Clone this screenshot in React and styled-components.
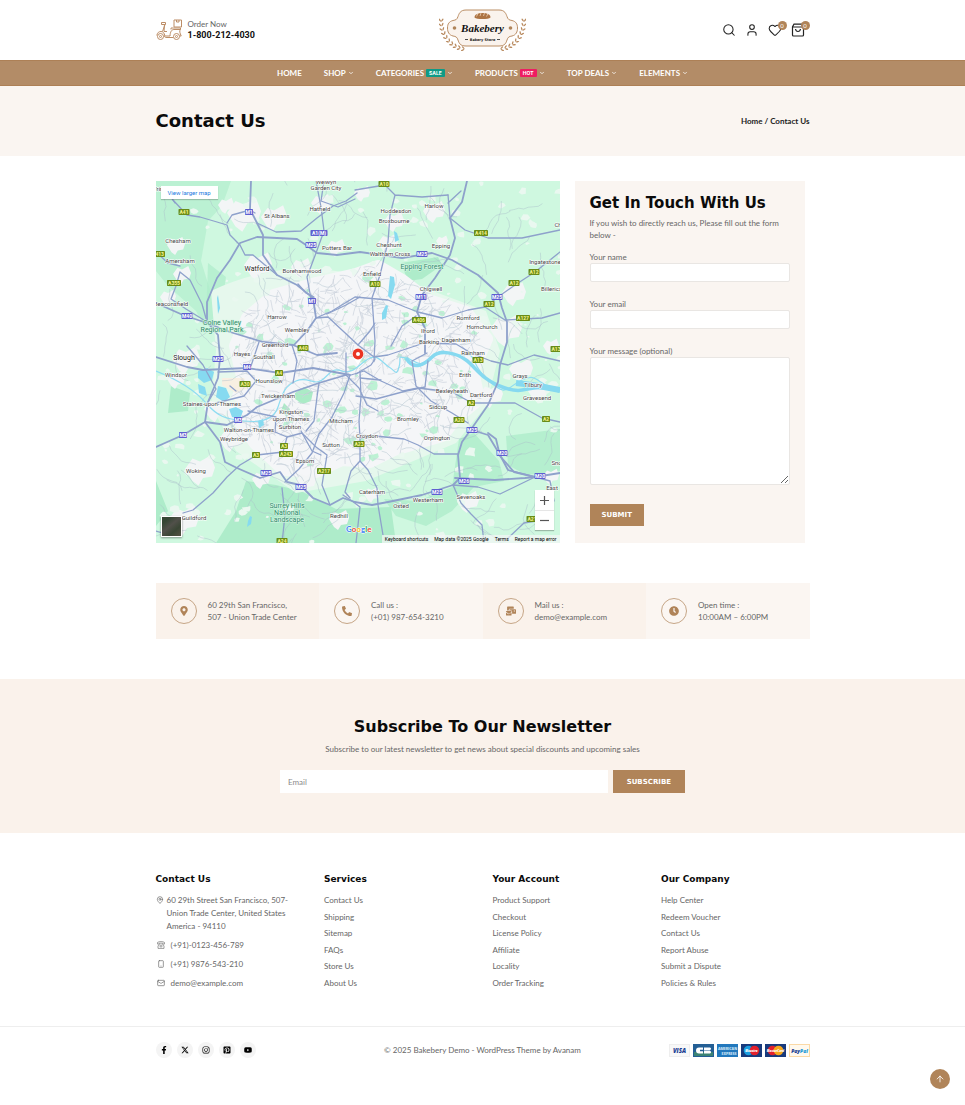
import React from 'react';
import styled, { createGlobalStyle } from 'styled-components';
import { Search, User, Heart, ChevronDown, ArrowUp, MapPin, Mail, Smartphone } from 'lucide-react';
import {
  FaMapMarkerAlt, FaPhoneAlt, FaMailBulk, FaClock, FaFacebookF, FaInstagram, FaPinterestSquare, FaYoutube,
} from 'react-icons/fa';
import { FaXTwitter } from 'react-icons/fa6';

const brown = '#b08459';
const wide = '"DejaVu Sans", sans-serif';
const body = 'Lato, "Liberation Sans", sans-serif';

const GlobalStyle = createGlobalStyle`
  *, *::before, *::after { box-sizing: border-box; }
  body { margin: 0; background: #fff; color: #666; font: 400 8px/12px ${body}; }
  h1, h2, h3, p, ul, address { margin: 0; padding: 0; font-style: normal; }
  ul { list-style: none; }
  a { color: inherit; text-decoration: none; }
  button, input, textarea { font: inherit; color: inherit; }
`;

const Container = styled.div`
  width: min(100% - 32px, 654px);
  margin: 0 auto;
`;

/* Header */

const HeaderRow = styled(Container)`
  display: grid;
  grid-template-columns: 1fr auto 1fr;
  align-items: center;
  height: 60px;
`;

const OrderNow = styled.a`
  display: flex;
  align-items: center;
  gap: 6px;
  line-height: 11px;
  strong {
    display: block;
    font: 700 9px/11px Roboto, sans-serif;
    color: #111;
  }
`;

const LogoLink = styled.a`
  display: block;
  svg { display: block; }
`;

const Tools = styled.div`
  display: flex;
  justify-content: flex-end;
  gap: 9px;
  padding-right: 5px;
`;

const ToolButton = styled.button`
  position: relative;
  display: flex;
  padding: 0;
  border: 0;
  background: none;
  color: #222;
  cursor: pointer;
`;

const Count = styled.span`
  position: absolute;
  top: -2px;
  right: -5px;
  width: 9px;
  height: 9px;
  border-radius: 50%;
  background: ${brown};
  color: #fff;
  font-size: 6px;
  line-height: 9px;
  text-align: center;
`;

const Nav = styled.nav`
  display: flex;
  justify-content: center;
  gap: 22px;
  height: 26px;
  background: #b38c67;
  border: solid #ad8056;
  border-width: 1px 0;
`;

const NavLink = styled.a`
  display: flex;
  align-items: center;
  gap: 2px;
  color: #fff;
  font-weight: 700;
  text-transform: uppercase;
  white-space: nowrap;
`;

const Tag = styled.span`
  padding: 0 3px;
  border-radius: 1px;
  background: ${(p) => p.$color};
  font: 700 5px/8px Inter, sans-serif;
`;

const Banner = styled.div`
  background: #faf5f1;
`;

const BannerRow = styled(Container)`
  display: flex;
  align-items: center;
  justify-content: space-between;
  height: 70px;
`;

const Heading = styled.h2`
  color: #0b0b0b;
  font: 700 ${(p) => p.$size || 15}px/${(p) => p.$line || 14}px ${wide};
`;

const Crumbs = styled.nav`
  color: #222;
  font-weight: 700;
`;

/* Map and contact form */

const ContactRow = styled(Container)`
  display: grid;
  grid-template-columns: 404fr 230fr;
  gap: 15px;
  margin-top: 25px;
  padding-right: 5px;
`;

const MapFrame = styled.section`
  position: relative;
  min-width: 0;
  overflow: hidden;
  font-family: Roboto, sans-serif;
`;

const MapArt = styled.svg`
  display: block;
  width: 100%;
  height: 100%;
`;

const LargerMap = styled.a`
  position: absolute;
  top: 5px;
  left: 5px;
  padding: 0 7px;
  background: #fff;
  box-shadow: 0 1px 1px rgba(0, 0, 0, 0.2);
  color: #1a7ae0;
  font-size: 6px;
  line-height: 13px;
`;

const ZoomBox = styled.div`
  position: absolute;
  right: 6px;
  bottom: 13px;
  width: 19px;
  background: #fff;
  box-shadow: 0 1px 1px rgba(0, 0, 0, 0.25);
`;

const ZoomButton = styled.button`
  display: block;
  width: 100%;
  height: 20px;
  padding: 0;
  border: 0;
  background: none;
  color: #555;
  cursor: pointer;
  & + & { border-top: 1px solid #e6e6e6; }
  svg { display: block; margin: 0 auto; }
`;

const Satellite = styled.button`
  position: absolute;
  left: 5px;
  bottom: 6px;
  width: 21px;
  height: 21px;
  padding: 0;
  border: 1px solid #fff;
  box-shadow: 0 1px 2px rgba(0, 0, 0, 0.4);
  background: linear-gradient(140deg, #354634 20%, #51504a 45%, #3a4635 70%, #555143);
`;

const MapCredits = styled.div`
  position: absolute;
  right: 0;
  bottom: 0;
  display: flex;
  gap: 6px;
  padding: 0 3px;
  background: rgba(245, 247, 246, 0.7);
  color: #000;
  font-size: 5px;
  line-height: 8px;
`;

const FormCard = styled.form`
  padding: 15px 15px 16px;
  background: #faf5f1;
`;

const Intro = styled.p`
  margin: 7px 0 10px;
`;

const Field = styled.label`
  display: block;
  margin-bottom: 16px;
`;

const boxed = `
  display: block;
  width: 100%;
  border: 1px solid #e9e6e3;
  border-radius: 2px;
  background: #fff;
  outline: none;
`;

const TextInput = styled.input`
  ${boxed}
  height: 19px;
  padding: 0 6px;
`;

const TextArea = styled.textarea`
  ${boxed}
  height: 128px;
  padding: 6px;
  resize: vertical;
`;

const Action = styled.button`
  height: ${(p) => p.$height}px;
  padding: 0 ${(p) => p.$pad || 12}px;
  border: 0;
  background: ${brown};
  color: #fff;
  font: 700 7px/10px ${wide};
  text-transform: uppercase;
  cursor: pointer;
`;

const Submit = styled(Action)`
  margin-top: 3px;
`;

/* Info strip */

const InfoStrip = styled(Container)`
  display: grid;
  grid-template-columns: repeat(4, 1fr);
  margin-top: 40px;
  margin-bottom: 40px;
`;

const InfoCell = styled.div`
  display: flex;
  align-items: center;
  gap: 11px;
  height: 56px;
  padding-left: 15px;
  background: #fbf6f2;
  &:nth-child(odd) { background: #faf2eb; }
`;

const Ring = styled.span`
  display: flex;
  align-items: center;
  justify-content: center;
  flex: none;
  width: 26px;
  height: 26px;
  border: 1px solid #c6a687;
  border-radius: 50%;
  color: ${brown};
`;

/* Newsletter */

const Newsletter = styled.section`
  padding: 40px 16px;
  background: #faf2eb;
  text-align: center;
`;

const Lead = styled.p`
  margin: 9px 0 15px;
`;

const SubscribeForm = styled.form`
  display: flex;
  gap: 5px;
  max-width: 405px;
  margin: 0 auto;
`;

const EmailInput = styled.input`
  flex: 1;
  min-width: 0;
  height: 23px;
  padding: 0 8px;
  border: 0;
  background: #fff;
  outline: none;
  &::placeholder { color: #8a8a8a; }
`;

/* Footer */

const FooterColumns = styled(Container)`
  display: grid;
  grid-template-columns: repeat(4, 1fr);
  gap: 20px;
  padding: 40px 0 36px;
`;

const FooterColumn = styled.section`
  display: flex;
  flex-direction: column;
  gap: 9px;
`;

const FooterList = styled.ul`
  display: flex;
  flex: 1;
  flex-direction: column;
  justify-content: space-between;
  line-height: 13px;
`;

const AddressList = styled.address`
  display: flex;
  flex-direction: column;
  gap: 6px;
  line-height: 13px;
`;

const AddressLine = styled.div`
  display: flex;
  align-items: flex-start;
  gap: ${(p) => (p.$first ? 3 : 6)}px;
  padding-left: ${(p) => (p.$first ? 0 : 1)}px;
  svg { flex: none; margin-top: 2px; }
`;

const Bottom = styled.div`
  border-top: 1px solid #eee;
`;

const BottomRow = styled(Container)`
  display: grid;
  grid-template-columns: 1fr auto 1fr;
  align-items: center;
  padding: 15px 0 47px;
`;

const Socials = styled.div`
  display: flex;
  gap: 5px;
`;

const Social = styled.a`
  display: flex;
  align-items: center;
  justify-content: center;
  width: 16px;
  height: 16px;
  border-radius: 50%;
  background: #f4f4f4;
  color: #000;
`;

const Payments = styled.div`
  display: flex;
  justify-content: flex-end;
  gap: 3px;
  svg { display: block; }
`;

const ToTop = styled.a`
  position: fixed;
  right: 15px;
  bottom: 16px;
  display: flex;
  align-items: center;
  justify-content: center;
  width: 20px;
  height: 20px;
  border-radius: 50%;
  background: ${brown};
  color: #fff;
`;

/* Drawings */

const Scooter = () => (
  <svg width="26" height="22" viewBox="0 0 26 22" fill="none" stroke="#bc8d66" strokeWidth="1" aria-hidden="true">
    <circle cx="4.5" cy="17.5" r="3" />
    <circle cx="4.5" cy="17.5" r="1" />
    <circle cx="20.5" cy="17.5" r="3" />
    <circle cx="20.5" cy="17.5" r="1" />
    <path d="M.8 16.5C1.3 13.5 3 12.5 5 12.5s3.500 1.500 3.800 4.500H14c.2-4 1.500-6.500 4-6.500h6.500c-1.500 1.500-.5 3.500.7 6.500H23.700M8 17c1 1.500 1.500 1.500 3 1.500h6.300" />
    <path d="M5.500 3.500h4v2h-4zM9 5.500l-2.500 7M8.500 5.500 8 12.500h3M15 10.500V9h9.500v1.500" />
    <path d="M18 1h7.500v7H18zM20.500 1v2h2.500V1" />
  </svg>
);

const leaves = Array.from({ length: 10 }, (_, i) => {
  const t = i / 9;
  const a = Math.PI * (1.02 - 0.47 * t);
  return { x: 27 + 25 * Math.cos(a), y: 12 + 28 * Math.sin(a), r: 90 - 78 * t };
});

const Laurel = () => (
  <g fill="#b98b60">
    {leaves.map((l, i) => (
      <g key={i} transform={`translate(${l.x} ${l.y}) rotate(${l.r})`}>
        <ellipse cx="0" cy="-1.500" rx="1.800" ry=".7" transform="rotate(35)" />
        <ellipse cx="0" cy="1.500" rx="1.800" ry=".7" transform="rotate(-35)" />
      </g>
    ))}
  </g>
);

const Logo = () => (
  <svg width="87" height="42" viewBox="0 0 87 42" role="img" aria-label="Bakebery">
    <Laurel />
    <g transform="translate(87 0) scale(-1 1)"><Laurel /></g>
    <path
      d="M27 1H60C66 1 67 5 68 7.500 69 10.500 70 11 73 11.500 77 12.500 78.500 15 78.500 19S77 26 73 27C70 27.500 69 28 68 31 67 34 66 37 60 37H27C21 37 20 34 19 31 18 28 17 27.500 14 27 10 26 8.500 23 8.500 19S10 12.500 14 11.500C17 11 18 10.500 19 7.500 20 5 21 1 27 1Z"
      fill="#faf3ed" stroke="#bb8e65"
    />
    <circle cx="15.500" cy="19" r="1.800" fill={brown} />
    <circle cx="71.500" cy="19" r="1.800" fill={brown} />
    <path d="M35.500 8.500c0-3 3-4.500 8-4.500s8 1.500 8 4.500c-2 2-14 2-16 0z" fill="#ad7443" />
    <path d="M39 4.500l-1.500 3M42 4l-1 3M45.500 4l-1 3M49 4.500l-1.500 3" stroke="#f3dcc4" strokeWidth=".7" />
    <text x="43.500" y="23" textAnchor="middle" fontFamily="Liberation Serif, serif" fontStyle="italic" fontWeight="700" fontSize="11" fill="#111">Bakebery</text>
    <text x="43.500" y="32" textAnchor="middle" fontFamily="DejaVu Sans, sans-serif" fontWeight="700" fontSize="3.500" fill="#222">Bakery Store</text>
    <path d="M26 30.500h3M58 30.500h3" stroke="#222" strokeWidth=".8" />
  </svg>
);

const Bag = () => (
  <svg width="14" height="14" viewBox="0 0 14 14" fill="none" stroke="currentColor" strokeWidth="1.200" aria-hidden="true">
    <path d="M1.500 3.800 3 1.200h8l1.500 2.600v8.200c0 .6-.4 1-1 1h-9c-.6 0-1-.4-1-1zM1.500 4h11M4.500 6c.3 1.700 1.200 2.500 2.500 2.500S9.200 7.700 9.500 6" />
  </svg>
);

const Telephone = () => (
  <svg width="8" height="8" viewBox="0 0 8 8" fill="none" stroke="#777" strokeWidth=".7" aria-hidden="true">
    <path d="M.4 3V1.500C2 .3 6 .3 7.600 1.500V3H5.700V2.200H2.300V3zM2.500 3 1 5v2.400h6V5L5.500 3" />
    <circle cx="4" cy="5" r="1.100" />
  </svg>
);

/* Map artwork: a seeded generator keeps the side streets and parks the same on every load. */

const seeded = (seed) => () => {
  seed = (seed * 16807) % 2147483647;
  return seed / 2147483647;
};

const cityEdge = [
  [200, 94], [160, 103], [118, 115], [92, 137], [80, 165], [88, 200], [78, 232], [100, 262], [128, 288], [160, 290],
  [186, 278], [214, 280], [238, 268], [286, 254], [300, 236], [322, 218], [316, 190], [330, 158], [310, 132], [272, 120],
  [246, 100], [222, 86],
];

const inCity = (x, y) => {
  let inside = false;
  for (let i = 0, j = cityEdge.length - 1; i < cityEdge.length; j = i, i += 1) {
    const [xi, yi] = cityEdge[i];
    const [xj, yj] = cityEdge[j];
    if ((yi > y) !== (yj > y) && x < ((xj - xi) * (y - yi)) / (yj - yi) + xi) inside = !inside;
  }
  return inside;
};

const wander = (rand, x, y, angle, steps, step, bend) => {
  let d = `M${x.toFixed(1)} ${y.toFixed(1)}`;
  let a = angle;
  let px = x;
  let py = y;
  for (let i = 0; i < steps; i += 1) {
    a += (rand() - 0.5) * bend;
    px += Math.cos(a) * step;
    py += Math.sin(a) * step;
    d += `L${px.toFixed(1)} ${py.toFixed(1)}`;
  }
  return d;
};

const buildMap = () => {
  const rand = seeded(4217);
  let streets = '';
  let lanes = '';
  const parks = [];
  const clearings = [];
  for (let i = 0; i < 950; i += 1) {
    const x = 75 + rand() * 260;
    const y = 85 + rand() * 210;
    if (inCity(x, y)) streets += wander(rand, x, y, rand() * 6.28, 3, 4, 0.7);
  }
  for (let i = 0; i < 190; i += 1) {
    lanes += wander(rand, rand() * 404, rand() * 362, rand() * 6.28, 7, 5, 1.2);
  }
  for (let i = 0; i < 420; i += 1) {
    const x = rand() * 404;
    const y = rand() * 362;
    const r = 1 + rand() * 3;
    const points = Array.from({ length: 7 }, (_, k) => {
      const q = r * (0.6 + rand() * 0.8);
      const a = (k / 7) * 6.28;
      return `${(x + q * 1.3 * Math.cos(a)).toFixed(1)},${(y + q * Math.sin(a)).toFixed(1)}`;
    }).join(' ');
    if (inCity(x, y)) { if (rand() < 0.7) parks.push(points); } else if (rand() < 0.45) clearings.push(points);
  }
  return { streets, lanes, parks, clearings };
};

const terrain = buildMap();

const towns = [
  [88, 32, 17], [20, 64, 9], [26, 93, 9], [118, 36, 13], [102, 84, 14], [165, 22, 10], [180, 66, 9], [238, 40, 10],
  [278, 30, 11], [286, 60, 6], [358, 112, 12], [12, 116, 8], [30, 178, 14], [70, 24, 8], [145, 86, 10], [350, 148, 16],
  [365, 188, 12], [382, 210, 10], [335, 214, 12], [44, 288, 15], [28, 338, 15], [183, 338, 10], [216, 313, 8],
  [312, 320, 11], [20, 198, 9], [60, 228, 12], [75, 258, 12], [105, 298, 9], [395, 165, 8], [395, 295, 8],
  [150, 300, 10], [206, 12, 8], [232, 62, 10],
];

const motorways = [
  'M95 0 94 28 101 42 107 54 107 74 121 94 141 104 157 117 160 137 151 150 138 164',
  'M62 154 51 141 51 121 61 97 74 79 84 62 101 56 141 58 150 64 161 72 181 74 204 71 246 77 276 72 296 79 322 94 342 112 346 127 351 141 351 161 344 184 342 201 332 224 316 247 306 261 302 274 304 297 297 304 266 314 232 321 216 324 199 321 187 317 174 324 157 317 144 304 131 301 124 291 104 297 81 287 69 281 64 261 49 241 52 221 62 197 64 177 62 154',
  'M311 0 306 21 294 37 299 57 294 74 279 97 266 114 261 131 269 147 269 172',
  'M0 122 27 134 51 142 74 151 107 161 137 164 161 174 181 172',
  'M0 176 31 186 47 189 91 187 124 192 157 187 194 194',
  'M0 266 27 254 49 241 71 244 91 234 101 226 137 211 163 202 190 194',
  'M316 249 332 254 344 274 352 289 379 296 404 292',
  'M332 252 340 258 344 275 358 291 379 296',
  'M299 297 339 299 369 297 379 296',
];

const aRoads = [
  'M17 19 31 34 44 36 61 41 71 44 74 54 84 64 89 74 97 74 121 94',
  'M0 8 12 12 19 22M71 42 76 34 94 29 99 32M101 42 120 51 145 50 161 37 177 25 190 20 201 12',
  'M160 0 165 26 168 50 160 72 151 96 155 118',
  'M165 20 182 26 199 18M168 0 165 20',
  'M199 9 229 4 239 14 266 16 292 14M239 14 234 34 232 61 224 94 216 117 219 160 218 180',
  'M294 37 309 49 332 57 366 57 404 49',
  'M292 14 294 37M292 22 305 10',
  'M404 71 379 91 359 104 342 116 329 126 312 129 286 137 262 131 249 126 232 119 199 116 176 130 160 137',
  'M329 126 349 139 386 137 404 132',
  'M160 137 172 136 187 150 202 164 218 176 232 174 268 162 300 163 315 172 335 180 352 184 378 174 404 180',
  'M171 133 190 124 204 116M202 164 214 150 219 142M235 165 246 145 260 135',
  'M24 91 20 105 15 118 30 128 51 141M24 91 34 99 46 123 51 141',
  'M0 71 12 82 24 85',
  'M27 332 37 329 57 312 71 296 84 284 101 274 127 271 131 256 119 251 120 236 92 230',
  'M31 165 47 184 60 208 52 221M62 191 91 190 100 200 88 215 60 222',
  'M126 307 129 334 126 362M129 301 143 288 156 272 163 253 176 236 188 212 194 194',
  'M174 324 166 304 171 274 160 266 146 252 131 256',
  'M194 317 189 311 195 290 204 280 212 289 221 307 222 324 227 354',
  'M204 280 204 257 220 255 248 258 262 264 278 273 302 273',
  'M204 190 205 215 203 240 204 257M190 194 203 207 211 224 222 230',
  'M195 194 208 190 225 200 247 210 262 207 296 211 316 222 359 222 386 237 404 241',
  'M256 180 260 205 275 220 296 232 312 242 M256 180 271 172',
  'M200 193 215 184 219 178M204 197 225 199M200 215 220 218 250 210 269 206 272 180',
  'M297 304 305 322 315 333 326 344 328 362M297 304 322 306 344 313 379 296',
  'M136 164 141 180 137 202M163 202 161 216 158 240 150 250M190 172 190 194M145 250 156 270 165 274',
  'M142 103 150 112 158 116M0 350 14 354M187 314 196 320 204 326 200 362',
  'M379 296 394 300 398 320M351 358 368 342 380 340M103 161 95 185M74 205 80 210',
];

const thames = 'M0 190C20 198 38 208 50 222S70 238 88 240 118 238 122 226 128 205 140 200 158 205 166 199 176 186 186 190 202 184 212 178 226 182 233 186 240 196 243 186 240 175 250 177 262 189 276 176 289 176 306 174 312 181 332 199 349 207 366 199 379 204 404 209';

const lakes = [
  'M42 190l9-3 7 4-2 8-8 3-6-5z', 'M62 205l8 2 4 9-6 5-8-5z', 'M73 228l7-2 7 4-3 8-8-2z', 'M42 203l7 3 2 9-8-3z',
  'M102 240l5-2 1 6-5 3z', 'M234 95l4 1 1 8-4 14-3-3z', 'M238 50l3 2 2 7-4 2z', 'M226 132l4-8 2 1-2 12-4 2z', 'M92 340l2-5 2 1-1 7-4 3z',
  'M61 117l1-3 2 13-2 6z',
];

const places = [
  [170, 3, 'Welwyn'], [170, 9, 'Garden City'], [164, 30, 'Hatfield'], [240, 32, 'Hoddesdon'], [238, 42, 'Broxbourne'],
  [278, 27, 'Harlow'], [121, 37, 'St Albans'], [22, 62, 'Chesham'], [24, 82, 'Amersham'], [181, 69, 'Potters Bar'],
  [233, 66, 'Cheshunt'], [234, 75, 'Waltham Cross'], [285, 67, 'Epping'], [146, 92, 'Borehamwood'], [216, 95, 'Enfield'],
  [389, 83, 'Ingatestone'], [397, 110, 'Billericay'], [275, 110, 'Chigwell'], [15, 125, 'Beaconsfield'], [121, 138, 'Harrow'],
  [141, 151, 'Wembley'], [119, 166, 'Greenford'], [312, 139, 'Romford'], [326, 148, 'Hornchurch'], [272, 152, 'Ilford'],
  [273, 163, 'Barking'], [300, 161, 'Dagenham'], [317, 174, 'Rainham'], [86, 175, 'Hayes'], [108, 178, 'Southall'],
  [20, 196, 'Windsor'], [113, 202, 'Hounslow'], [122, 217, 'Twickenham'], [56, 225, 'Staines-upon-Thames'],
  [135, 233, 'Kingston'], [135, 240, 'upon Thames'], [134, 248, 'Surbiton'], [93, 251, 'Walton-on-Thames'],
  [78, 260, 'Weybridge'], [185, 242, 'Mitcham'], [175, 266, 'Sutton'], [149, 282, 'Epsom'], [40, 292, 'Woking'],
  [38, 339, 'Guildford'], [183, 337, 'Redhill'], [309, 196, 'Erith'], [364, 197, 'Grays'], [377, 206, 'Tilbury'],
  [296, 212, 'Bexleyheath'], [325, 216, 'Dartford'], [381, 219, 'Gravesend'], [282, 228, 'Sidcup'], [252, 240, 'Bromley'],
  [211, 257, 'Croydon'], [281, 259, 'Orpington'], [216, 313, 'Caterham'], [272, 321, 'Westerham'], [245, 327, 'Oxted'],
  [315, 318, 'Sevenoaks'], [408, 284, 'Snodland'], [396, 309, 'East'], [4, 10, 'Tring'], [414, 46, 'Chelmsford'],
];

const shields = [
  [28, 31, 'A41'], [93, 31, 'M1', 1], [163, 52, 'A1(M)', 1], [155, 64, 'M25', 1], [228, 3, 'A10'], [325, 52, 'A414'],
  [2, 73, 'A413'], [18, 102, 'A355'], [266, 73, 'M25', 1], [219, 103, 'A10'], [31, 135, 'M40', 1], [156, 120, 'M1', 1],
  [265, 116, 'M11', 1], [341, 116, 'M25', 1], [358, 102, 'A12'], [378, 91, 'A12'], [333, 123, 'A12'], [367, 137, 'A127'],
  [263, 139, 'A406'], [147, 167, 'A40'], [62, 178, 'M25', 1], [91, 186, 'M4', 1], [123, 192, 'A4'], [89, 203, 'A30'],
  [322, 179, 'A13'], [400, 168, 'A13'], [82, 239, 'M3', 1], [27, 254, 'M3', 1], [128, 265, 'A3'], [130, 273, 'A243'],
  [100, 274, 'A3'], [110, 292, 'M25', 1], [145, 306, 'M25', 1], [168, 290, 'A217'], [203, 263, 'A23'], [315, 222, 'A2'],
  [303, 239, 'A20'], [316, 249, 'M25', 1], [346, 272, 'M20', 1], [390, 238, 'A2'], [308, 300, 'M26', 1], [281, 311, 'M25', 1],
  [384, 295, 'M20', 1], [126, 360, 'A24'], [376, 338, 'A21'],
];

const MapDrawing = () => (
  <MapArt viewBox="0 0 404 362" preserveAspectRatio="xMidYMid slice" role="img" aria-label="Map of London and surrounding towns">
    <rect width="404" height="362" fill="#cff8e0" />
    <g fill="#aeecca">
      <path d="M0 0H75L66 25 52 40 45 80 55 112 48 145 40 130 12 105 0 90z" opacity=".6" />
      <path d="M90 300 120 304 145 310 180 328 235 326 240 362H60L80 330z" />
      <path d="M228 318 262 320 296 306 303 258 318 252 343 280 348 300 318 306 296 330 270 345 240 335z" opacity=".8" />
      <path d="M350 255 404 248V290L370 294 352 284z" opacity=".8" />
      <path d="M245 82 282 76 286 84 266 98 252 100z" />
      <path d="M52 82 70 96 62 146 50 140z" opacity=".7" />
      <path d="M15 205 34 212 32 230 12 232z" />
      <path d="M0 300 12 330 0 345zM85 350 130 338 180 362H80z" />
    </g>
    <path d="M55 110Q120 80 180 90L250 100 330 130 344 170 330 225 300 262 210 300 140 312 80 270 55 225 60 170z" fill="#e6f8ed" />
    <polygon points={cityEdge.map((p) => p.join(',')).join(' ')} fill="#f5f6f8" stroke="#f5f6f8" strokeWidth="14" strokeLinejoin="round" />
    <g fill="#f3f5f6">
      {towns.map(([x, y, r], i) => (
        <path key={i} d={`M${x - r} ${y}l${r * 0.5} ${-r * 0.7} ${r * 0.5} ${r * 0.2} ${r * 0.7} ${-r * 0.4} ${r * 0.3} ${r * 0.8}-${r * 0.2} ${r * 0.6}-${r * 0.6} ${r * 0.1}-${r * 0.3} ${r * 0.5}-${r * 0.4}-${r * 0.3}z`} />
      ))}
    </g>
    <g fill="#bdf1d4">{terrain.parks.map((p, i) => <polygon key={i} points={p} />)}</g>
    <g fill="#eaf8f0">{terrain.clearings.map((p, i) => <polygon key={i} points={p} />)}</g>
    <path d="M139 212l9-6 9 5-2 9-8 3-8-5zM128 222l6 6-3 8-6-6z" fill="#abebc6" />
    <path d="M66 197h22l4 10-12 5-14-8z" fill="#f8efe2" />
    <path d={terrain.lanes} fill="none" stroke="#a9bfca" strokeWidth=".6" opacity=".75" />
    <path d={terrain.streets} fill="none" stroke="#cbd3dd" strokeWidth=".7" />
    <g fill="#86daf0">{lakes.map((d) => <path key={d} d={d} />)}</g>
    <path d={thames} fill="none" stroke="#8edcf1" strokeWidth="1.200" />
    <path d="M250 177C258 190 268 184 276 176S300 172 310 179 325 199 349 207 370 200 404 210" fill="none" stroke="#86d9f0" strokeWidth="3.500" />
    <path d="M360 202Q380 204 404 209" fill="none" stroke="#86d9f0" strokeWidth="6" />
    <g fill="none" stroke="#8ea1cb" strokeLinejoin="round" strokeLinecap="round">
      {aRoads.map((d) => <path key={d} d={d} strokeWidth="1.300" />)}
      {motorways.map((d) => <path key={d} d={d} strokeWidth="1.800" />)}
    </g>
    <g fontFamily="Roboto, sans-serif" fontSize="6" fill="#444" textAnchor="middle" stroke="#fff" strokeWidth="1.200" strokeLinejoin="round" paintOrder="stroke">
      {places.map(([x, y, name]) => <text key={name} x={x} y={y}>{name}</text>)}
      <g fontSize="7" fill="#222">
        <text x="101" y="90">Watford</text>
        <text x="28" y="179">Slough</text>
      </g>
      <g fontSize="7" fill="#2f8a6b" stroke="#d9f6e5">
        <text x="66" y="144">Colne Valley</text>
        <text x="66" y="151">Regional Park</text>
        <text x="266" y="88">Epping Forest</text>
        <text x="131" y="327">Surrey Hills</text>
        <text x="131" y="334">National</text>
        <text x="131" y="341">Landscape</text>
      </g>
    </g>
    <g fontFamily="Roboto, sans-serif" fontSize="5" fontWeight="700" textAnchor="middle">
      {shields.map(([x, y, name, motorway], i) => (
        <g key={i}>
          <rect x={x - name.length * 1.5 - 1} y={y - 3} width={name.length * 3 + 2} height="6" rx=".7" fill={motorway ? '#5f5fd0' : '#698c18'} />
          <text x={x} y={y + 2} fill={motorway ? '#fff' : '#f6f58e'}>{name}</text>
        </g>
      ))}
    </g>
    <path d="M202 184 197 176a5.800 5.800 0 1 1 10 0z" fill="#fff" />
    <circle cx="202" cy="173" r="5.400" fill="#ea3323" />
    <circle cx="202" cy="173" r="2" fill="#fff" />
    <text x="190" y="351" fontFamily="Lato, sans-serif" fontSize="8" fontWeight="700" stroke="#fff" strokeWidth="1" paintOrder="stroke">
      <tspan fill="#4285f4">G</tspan><tspan fill="#ea4335">o</tspan><tspan fill="#fbbc05">o</tspan><tspan fill="#4285f4">g</tspan><tspan fill="#34a853">l</tspan><tspan fill="#ea4335">e</tspan>
    </text>
  </MapArt>
);

const Card = ({ label, fill, stroke, children }) => (
  <svg width="21" height="13" viewBox="0 0 21 13" role="img" aria-label={label}>
    <rect x=".5" y=".5" width="20" height="12" fill={fill} stroke={stroke || fill} />
    {children}
  </svg>
);

const cardText = { textAnchor: 'middle', fontFamily: 'Open Sans, sans-serif', fontWeight: 800, fontStyle: 'italic' };

const PaymentCards = () => (
  <Payments>
    <Card label="Visa" fill="#f8f8f8" stroke="#eee">
      <text x="10.500" y="9" fontSize="6" fill="#1b3f94" {...cardText}>VISA</text>
    </Card>
    <Card label="Carte Bancaire" fill="#245f95">
      <path d="M1 8h19v4H1z" fill="#3c8375" />
      <path d="M10 3.500H6a3 3 0 0 0 0 6h4V7.300H7V5.700h3zM11 3.500h6a1.400 1.400 0 0 1 0 2.700h-6zM11 6.800h6a1.400 1.400 0 0 1 0 2.700h-6z" fill="#fff" />
    </Card>
    <Card label="American Express" fill="#2278bd">
      <text x="10.500" y="6" fontSize="3.500" fill="#c8e2f4" {...cardText} fontStyle="normal">AMERICAN</text>
      <text x="12" y="10.500" fontSize="3.500" fill="#c8e2f4" {...cardText} fontStyle="normal">EXPRESS</text>
    </Card>
    <Card label="Maestro" fill="#183a7c">
      <circle cx="7.500" cy="6.500" r="4.800" fill="#1a9ee0" />
      <circle cx="13.500" cy="6.500" r="4.800" fill="#e3212c" />
      <text x="10.500" y="7.500" fontSize="3" fill="#fff" {...cardText}>Maestro</text>
    </Card>
    <Card label="MasterCard" fill="#183a7c">
      <circle cx="7.500" cy="6.500" r="4.800" fill="#e3212c" />
      <circle cx="13.500" cy="6.500" r="4.800" fill="#f7a71c" />
      <text x="10.500" y="7.500" fontSize="3" fill="#fff" {...cardText}>MasterCard</text>
    </Card>
    <Card label="PayPal" fill="#fff9ee" stroke="#fbd9a5">
      <text x="10.500" y="8.500" fontSize="5" fill="#1b3f94" {...cardText}>Pay<tspan fill="#1a9ad8">Pal</tspan></text>
    </Card>
  </Payments>
);

const menu = [
  { label: 'Home', plain: true },
  { label: 'Shop' },
  { label: 'Categories', tag: 'SALE', color: '#0f9a86' },
  { label: 'Products', tag: 'HOT', color: '#ee1d62' },
  { label: 'Top Deals' },
  { label: 'Elements' },
];

const info = [
  { icon: FaMapMarkerAlt, lines: ['60 29th San Francisco,', '507 - Union Trade Center'] },
  { icon: FaPhoneAlt, lines: ['Call us :', '(+01) 987-654-3210'] },
  { icon: FaMailBulk, lines: ['Mail us :', 'demo@example.com'] },
  { icon: FaClock, lines: ['Open time :', '10:00AM – 6:00PM'] },
];

const footerLinks = [
  { title: 'Services', links: ['Contact Us', 'Shipping', 'Sitemap', 'FAQs', 'Store Us', 'About Us'] },
  { title: 'Your Account', links: ['Product Support', 'Checkout', 'License Policy', 'Affiliate', 'Locality', 'Order Tracking'] },
  { title: 'Our Company', links: ['Help Center', 'Redeem Voucher', 'Contact Us', 'Report Abuse', 'Submit a Dispute', 'Policies & Rules'] },
];

const socials = [
  ['Facebook', FaFacebookF], ['X', FaXTwitter], ['Instagram', FaInstagram], ['Pinterest', FaPinterestSquare], ['YouTube', FaYoutube],
];

export default function App() {
  return (
    <>
      <GlobalStyle />
      <header id="top">
        <HeaderRow>
          <OrderNow href="tel:18002124030">
            <Scooter />
            <span>Order Now<strong>1-800-212-4030</strong></span>
          </OrderNow>
          <LogoLink href="#top"><Logo /></LogoLink>
          <Tools>
            <ToolButton type="button" aria-label="Search"><Search size={14} strokeWidth={1.8} /></ToolButton>
            <ToolButton type="button" aria-label="Account"><User size={14} strokeWidth={1.8} /></ToolButton>
            <ToolButton type="button" aria-label="Wishlist"><Heart size={14} strokeWidth={1.8} /><Count>0</Count></ToolButton>
            <ToolButton type="button" aria-label="Cart"><Bag /><Count>0</Count></ToolButton>
          </Tools>
        </HeaderRow>
        <Nav>
          {menu.map((item) => (
            <NavLink href="#top" key={item.label}>
              {item.label}
              {item.tag && <Tag $color={item.color}>{item.tag}</Tag>}
              {!item.plain && <ChevronDown size={6} strokeWidth={3} />}
            </NavLink>
          ))}
        </Nav>
      </header>

      <main>
        <Banner>
          <BannerRow>
            <Heading as="h1" $size={18} $line={20}>Contact Us</Heading>
            <Crumbs aria-label="Breadcrumb"><a href="#top">Home</a> / Contact Us</Crumbs>
          </BannerRow>
        </Banner>

        <ContactRow>
          <MapFrame>
            <MapDrawing />
            <LargerMap href="#map">View larger map</LargerMap>
            <Satellite type="button" aria-label="Satellite view" />
            <ZoomBox>
              <ZoomButton type="button" aria-label="Zoom in">
                <svg width="9" height="9" viewBox="0 0 9 9" stroke="currentColor" strokeWidth="1.200"><path d="M0 4.500h9M4.500 0v9" /></svg>
              </ZoomButton>
              <ZoomButton type="button" aria-label="Zoom out">
                <svg width="9" height="9" viewBox="0 0 9 9" stroke="currentColor" strokeWidth="1.200"><path d="M0 4.500h9" /></svg>
              </ZoomButton>
            </ZoomBox>
            <MapCredits>
              <span>Keyboard shortcuts</span>
              <span>Map data ©2025 Google</span>
              <a href="#map">Terms</a>
              <a href="#map">Report a map error</a>
            </MapCredits>
          </MapFrame>

          <FormCard onSubmit={(e) => e.preventDefault()}>
            <Heading>Get In Touch With Us</Heading>
            <Intro>If you wish to directly reach us, Please fill out the form below -</Intro>
            <Field>Your name<TextInput type="text" name="name" /></Field>
            <Field>Your email<TextInput type="email" name="email" /></Field>
            <Field>Your message (optional)<TextArea name="message" /></Field>
            <Submit type="submit" $height={22}>Submit</Submit>
          </FormCard>
        </ContactRow>

        <InfoStrip>
          {info.map(({ icon: Icon, lines }) => (
            <InfoCell key={lines[0]}>
              <Ring><Icon size={10} /></Ring>
              <p>{lines[0]}<br />{lines[1]}</p>
            </InfoCell>
          ))}
        </InfoStrip>

        <Newsletter>
          <Heading $size={16} $line={15}>Subscribe To Our Newsletter</Heading>
          <Lead>Subscribe to our latest newsletter to get news about special discounts and upcoming sales</Lead>
          <SubscribeForm onSubmit={(e) => e.preventDefault()}>
            <EmailInput type="email" placeholder="Email" aria-label="Email" />
            <Action type="submit" $height={23} $pad={14}>Subscribe</Action>
          </SubscribeForm>
        </Newsletter>
      </main>

      <footer>
        <FooterColumns>
          <FooterColumn>
            <Heading as="h3" $size={9} $line={12}>Contact Us</Heading>
            <AddressList>
              <AddressLine $first><MapPin size={8} /><span>60 29th Street San Francisco, 507-Union Trade Center, United States America - 94110</span></AddressLine>
              <AddressLine><Telephone /><a href="tel:910123456789">(+91)-0123-456-789</a></AddressLine>
              <AddressLine><Smartphone size={8} /><a href="tel:919876543210">(+91) 9876-543-210</a></AddressLine>
              <AddressLine><Mail size={8} /><a href="mailto:demo@example.com">demo@example.com</a></AddressLine>
            </AddressList>
          </FooterColumn>
          {footerLinks.map((column) => (
            <FooterColumn key={column.title}>
              <Heading as="h3" $size={9} $line={12}>{column.title}</Heading>
              <FooterList>
                {column.links.map((link) => <li key={link}><a href="#top">{link}</a></li>)}
              </FooterList>
            </FooterColumn>
          ))}
        </FooterColumns>
        <Bottom>
          <BottomRow>
            <Socials>
              {socials.map(([name, Icon]) => <Social href="#top" key={name} aria-label={name}><Icon size={8} /></Social>)}
            </Socials>
            <p>© 2025 Bakebery Demo - WordPress Theme by Avanam</p>
            <PaymentCards />
          </BottomRow>
        </Bottom>
      </footer>
      <ToTop href="#top" aria-label="Back to top"><ArrowUp size={10} /></ToTop>
    </>
  );
}
